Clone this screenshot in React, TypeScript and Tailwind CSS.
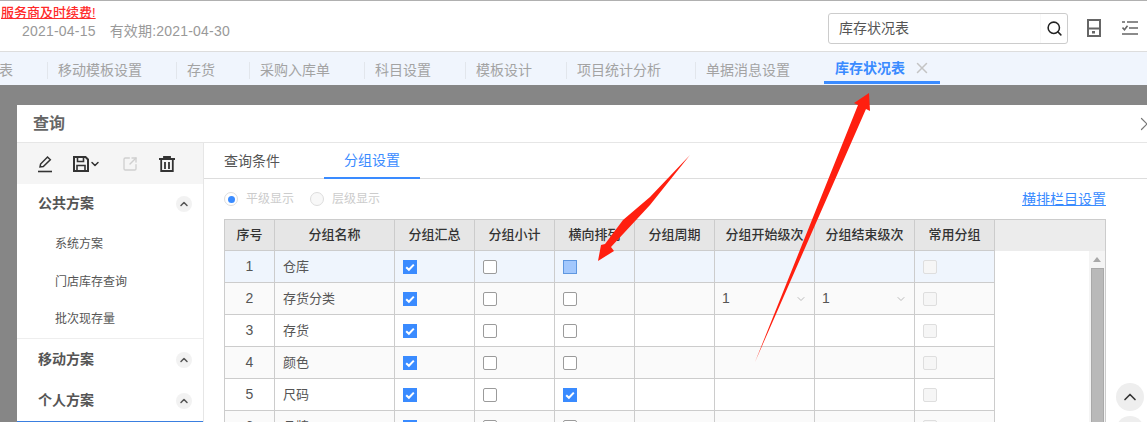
import { ChevronDown, ChevronUp, Search, SquareArrowOutUpRight, X } from 'lucide-react'

const FONT = "font-['Liberation_Sans','Noto_Sans_CJK_SC',sans-serif]"

const tabs = ['移动模板设置', '存货', '采购入库单', '科目设置', '模板设计', '项目统计分析', '单据消息设置']

const columns = ['序号', '分组名称', '分组汇总', '分组小计', '横向排列', '分组周期', '分组开始级次', '分组结束级次', '常用分组']

const GRID = 'grid grid-cols-[50px_120px_80px_80px_80px_80px_100px_100px_80px]'

const rows = [
  { no: 1, name: '仓库', total: true, sub: false, cross: 'hover', level: false },
  { no: 2, name: '存货分类', total: true, sub: false, cross: 'off', level: true },
  { no: 3, name: '存货', total: true, sub: false, cross: 'off', level: false },
  { no: 4, name: '颜色', total: true, sub: false, cross: 'off', level: false },
  { no: 5, name: '尺码', total: true, sub: false, cross: 'on', level: false },
  { no: 6, name: '品牌', total: true, sub: false, cross: 'off', level: false },
]

function Checkbox({ state }: { state: 'on' | 'off' | 'hover' | 'disabled' }) {
  if (state === 'on') {
    return (
      <span className="flex size-[14px] items-center justify-center bg-[#3a8bff]">
        <svg viewBox="0 0 14 14" className="size-[14px]">
          <path d="M3.2 7.2 L5.9 9.8 L10.8 4.6" fill="none" stroke="#fff" strokeWidth="2" />
        </svg>
      </span>
    )
  }
  if (state === 'hover') {
    return <span className="block size-[14px] border border-[#5f97e0] bg-[#a3c8fd]" />
  }
  if (state === 'disabled') {
    return <span className="block size-[14px] rounded-[2px] border border-[#dedede] bg-[#f6f6f6]" />
  }
  return <span className="block size-[14px] rounded-[2px] border border-[#9b9b9b] bg-white" />
}

function SelectCell() {
  return (
    <div className="flex items-center justify-between pr-[7px] pl-[7px] text-[14px] text-[#555]">
      1
      <ChevronDown className="size-3 text-[#bbb]" />
    </div>
  )
}

function Cell({ children, center }: { children?: React.ReactNode; center?: boolean }) {
  return (
    <div className={`flex items-center border-r border-b border-[#cccccc] ${center ? 'justify-center' : 'pl-2'}`}>
      {children}
    </div>
  )
}

function GroupTitle({ title, height }: { title: string; height: string }) {
  return (
    <div className={`flex ${height} items-center justify-between pr-[11px] pl-[21px]`}>
      <span className="text-[14px] font-bold text-[#555]">{title}</span>
      <span className="flex size-4 items-center justify-center rounded-full bg-[#f2f2f2]">
        <ChevronUp className="size-3 text-[#555]" strokeWidth={3} />
      </span>
    </div>
  )
}

function Sidebar() {
  return (
    <aside className="flex w-[187px] shrink-0 flex-col border-r border-[#e6e6e6]">
      <div className="flex h-[41px] items-center bg-[#f5f5f5] pl-[20px]">
        <svg viewBox="0 0 16 18" className="h-[18px] w-4 text-[#333]">
          <path d="M3 12 L3.6 9 L10.5 2 L13.3 4.8 L6.3 11.6 Z" fill="none" stroke="currentColor" strokeWidth="1.5" />
          <path d="M1 16.5 H15" stroke="currentColor" strokeWidth="1.6" />
        </svg>
        <svg viewBox="0 0 16 16" className="ml-[20px] size-4 text-[#333]">
          <path d="M1 1 H12.5 L15 3.5 V15 H1 Z" fill="none" stroke="currentColor" strokeWidth="2" />
          <path d="M4.5 1 V5.5 H10.5 V1 M4 15 V9.5 H12 V15" fill="none" stroke="currentColor" strokeWidth="1.6" />
        </svg>
        <ChevronDown className="size-3 text-[#333]" strokeWidth={3} />
        <SquareArrowOutUpRight className="ml-[21px] size-4 text-[#cfcfcf]" />
        <svg viewBox="0 0 16 16" className="ml-[21px] size-4 text-[#333]">
          <path d="M0 3 H16 M5 3 V1 H11 V3" fill="none" stroke="currentColor" strokeWidth="1.8" />
          <path d="M2.2 3.5 V15 H13.8 V3.5" fill="none" stroke="currentColor" strokeWidth="1.8" />
          <path d="M6 6 V13 M10 6 V13" stroke="currentColor" strokeWidth="1.8" />
        </svg>
      </div>
      <GroupTitle title="公共方案" height="h-[39px]" />
      <div className="flex flex-col gap-[17.5px] border-b border-[#eeeeee] pt-[11px] pr-2 pb-[9px] pl-[38px] text-[12px] leading-[20px] text-[#555]">
        <span>系统方案</span>
        <span>门店库存查询</span>
        <span>批次现存量</span>
      </div>
      <GroupTitle title="移动方案" height="h-[41px]" />
      <GroupTitle title="个人方案" height="h-[41px]" />
      <div className="h-px bg-[#3a7fe0]" />
    </aside>
  )
}

function GroupTable() {
  return (
    <div className="ml-5 w-[882px] border-t border-r border-l border-[#cccccc]">
      <div className="flex h-[31px] bg-[#ececec]">
        <div className={`${GRID} h-full bg-[#e6e6e6]`}>
          {columns.map((col) => (
            <div
              key={col}
              className="flex items-center justify-center border-r border-b border-[#cccccc] text-[13px] font-medium text-[#333]"
            >
              {col}
            </div>
          ))}
        </div>
      </div>
      <div className="flex">
        <div className="w-[770px]">
          {rows.map((row) => (
            <div
              key={row.no}
              className={`${GRID} h-[32px] ${row.no === 1 ? 'bg-[#eff5fd]' : row.no % 2 === 0 ? 'bg-[#fafafa]' : 'bg-white'} text-[13px] text-[#555]`}
            >
              <Cell center>
                <span className="text-[14px]">{row.no}</span>
              </Cell>
              <Cell>{row.name}</Cell>
              <Cell>
                <Checkbox state={row.total ? 'on' : 'off'} />
              </Cell>
              <Cell>
                <Checkbox state={row.sub ? 'on' : 'off'} />
              </Cell>
              <Cell>
                <Checkbox state={row.cross as 'on' | 'off' | 'hover'} />
              </Cell>
              <Cell />
              <div className="grid items-center border-r border-b border-[#cccccc]">{row.level && <SelectCell />}</div>
              <div className="grid items-center border-r border-b border-[#cccccc]">{row.level && <SelectCell />}</div>
              <Cell>
                <Checkbox state="disabled" />
              </Cell>
            </div>
          ))}
        </div>
        <div className="flex flex-1 justify-end bg-white">
          <div className="flex w-[16px] flex-col items-center bg-[#f4f4f4] pt-[6px]">
            <span className="h-0 w-0 border-r-[4px] border-b-[5px] border-l-[4px] border-r-transparent border-b-[#a8a8a8] border-l-transparent" />
            <span className="mt-[6px] h-[200px] w-[13px] border border-[#a9a9a9] bg-[#b9b9b9]" />
          </div>
        </div>
      </div>
    </div>
  )
}

function QueryDialog() {
  return (
    <section className="ml-[17px] w-[1200px] bg-white">
      <div className="flex h-[38px] items-center justify-between border-b border-[#e6e6e6] pr-[59px] pl-4">
        <span className="text-[16px] font-bold text-[#666]">查询</span>
        <X className="size-[22px] text-[#777]" strokeWidth={1.3} />
      </div>
      <div className="flex">
        <Sidebar />
        <div className="min-w-0 flex-1">
          <div className="flex h-[36px] border-b border-[#dddddd] pl-[20px] text-[14px]">
            <span className="flex h-[35px] items-center pt-px text-[#555]">查询条件</span>
            <span className="ml-[44px] flex h-[36px] w-[96px] items-center justify-center border-b-2 border-[#3a8bff] pt-px text-[#3a8bff]">
              分组设置
            </span>
          </div>
          <div className="flex h-[40px] w-[922px] items-center justify-between pr-[20px] pl-[20px]">
            <div className="flex items-center text-[12px] text-[#cccccc]">
              <span className="flex size-[14px] items-center justify-center rounded-full border border-[#dddddd] bg-white">
                <span className="size-[7px] rounded-full bg-[#3a8bff]" />
              </span>
              <span className="ml-2">平级显示</span>
              <span className="ml-[16px] size-[14px] rounded-full border border-[#dddddd] bg-[#f8f8f8]" />
              <span className="ml-2">层级显示</span>
            </div>
            <a className="text-[14px] text-[#3a8bff] underline">横排栏目设置</a>
          </div>
          <GroupTable />
        </div>
      </div>
    </section>
  )
}

export default function App() {
  return (
    <div className={`${FONT} relative h-[422px] w-[1147px] overflow-hidden bg-[#868686]`}>
      <div className="h-px bg-[#b0b0b0]" />
      <header className="flex h-[51px] justify-between border-b border-[#dddddd] bg-white pr-[9px]">
        <div className="pt-[3px] pl-px">
          <a className="block text-[13px] leading-[17px] font-medium text-[#ff2a2a] underline">服务商及时续费!</a>
          <div className="flex gap-[14px] pl-[21px] text-[14px] leading-[20px] tracking-[0.2px] text-[#999]">
            <span>2021-04-15</span>
            <span>有效期:2021-04-30</span>
          </div>
        </div>
        <div className="flex items-start pt-3">
          <div className="flex h-[31px] w-[240px] items-center justify-between rounded-[3px] border border-[#cccccc] pl-[10px] text-[14px] text-[#555]">
            库存状况表
            <span className="flex h-full w-[27px] items-center justify-center border-l border-[#f8f8f8]">
              <Search className="size-[17px] text-[#222]" strokeWidth={2.2} />
            </span>
          </div>
          <svg viewBox="0 0 14 18" className="mt-[6px] ml-[19px] h-[18px] w-[14px] text-[#666]">
            <rect x="1" y="1" width="12" height="16" fill="none" stroke="currentColor" strokeWidth="2" />
            <path d="M1 9.5 H13" stroke="currentColor" strokeWidth="2" />
            <rect x="5" y="12" width="3" height="2.5" fill="currentColor" />
          </svg>
          <svg viewBox="0 0 16 16" className="mt-[7px] ml-[21px] size-4 shrink-0 text-[#666]">
            <path d="M0 2 H3 M5 2 H16 M7 8 H16 M0 14 H16" fill="none" stroke="currentColor" strokeWidth="1.6" />
            <path d="M0.5 7.5 L2.5 9.8 L5.5 5.8" fill="none" stroke="currentColor" strokeWidth="1.6" />
          </svg>
        </div>
      </header>
      <nav className="flex h-[33px] items-stretch bg-[#f0f5fd] pt-[3px] text-[14px] text-[#a3a3a3]">
        <div className="-ml-px flex items-center pr-[34px]">表</div>
        {tabs.map((tab) => (
          <div key={tab} className="flex items-center pr-[34px]">
            <span className="mr-[10px] h-[17px] w-px bg-[#e2e6ec]" />
            {tab}
          </div>
        ))}
        <div className="mb-px -mt-[3px] flex w-[116px] items-center border-b-[3px] border-[#3a8bff] pt-[3px] pl-[11px] font-bold text-[#3a8bff]">
          库存状况表
          <X className="ml-[8px] size-[18px] text-[#c4c4c4]" strokeWidth={2} />
        </div>
      </nav>
      <div className="h-[20px]" />
      <QueryDialog />

      <button className="absolute top-[383px] left-[1116px] flex size-[28px] items-center justify-center rounded-full bg-[#eeeeee]">
        <ChevronUp className="size-5 text-[#333]" strokeWidth={2} />
      </button>
      <button className="absolute top-[416px] left-[1116px] size-[28px] rounded-full bg-[#eeeeee]" />

      <svg viewBox="0 0 1147 422" className="pointer-events-none absolute inset-0 h-[422px] w-[1147px]">
        <polygon points="690,155 650,197 623,220 605,244 601,245 598,261 614,251 611,247 650,205" fill="#ff1f0f" />
        <polygon points="869,93 870,111 866,109 755,362 858,105 854,103" fill="#ff1f0f" />
      </svg>
    </div>
  )
}
